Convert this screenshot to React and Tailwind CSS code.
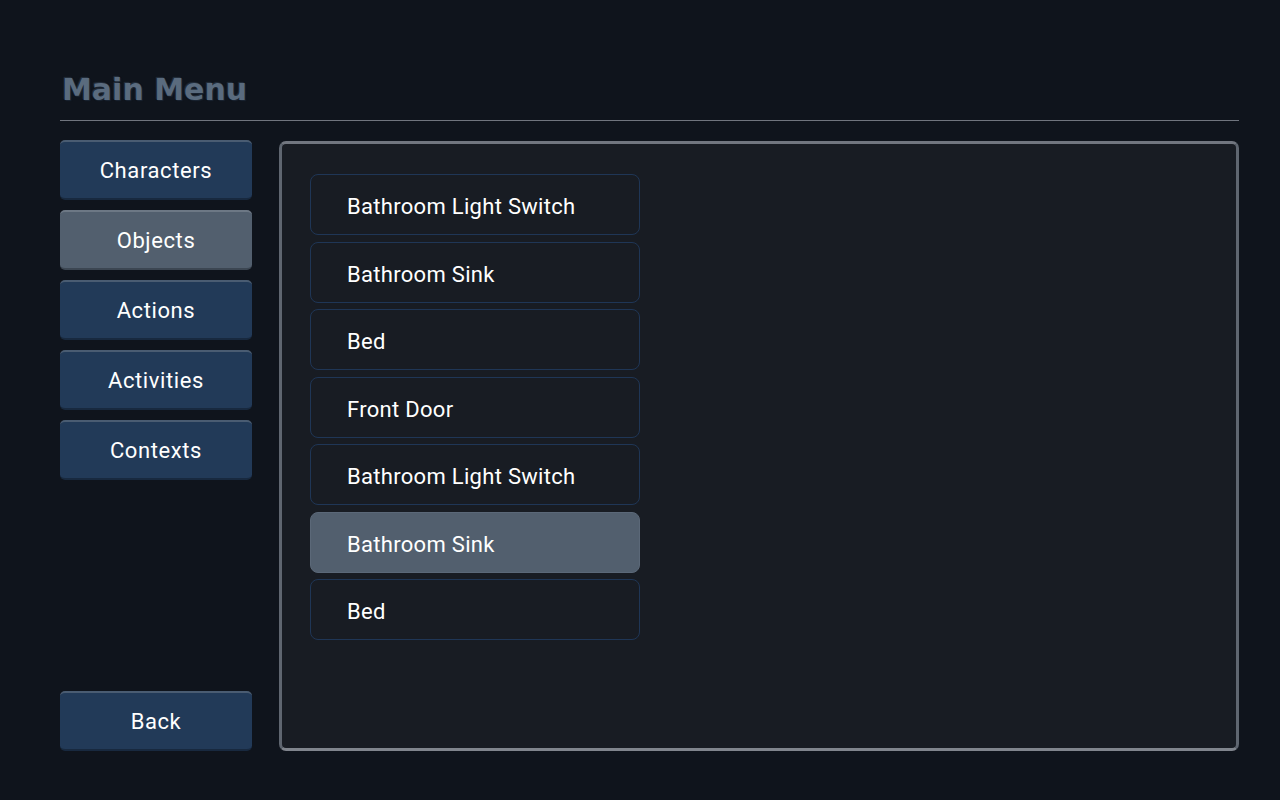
import React from 'react';

const menu = ['Characters', 'Objects', 'Actions', 'Activities', 'Contexts'];
const objects = [
  'Bathroom Light Switch',
  'Bathroom Sink',
  'Bed',
  'Front Door',
  'Bathroom Light Switch',
  'Bathroom Sink',
  'Bed',
];

function SideButton({ label, active }) {
  return (
    <button
      className={`h-[60px] w-full rounded-[5px] border-t-2 border-b-2 pt-[1px] text-[22px] text-white tracking-[0.6px] ${
        active
          ? 'bg-[#525f6e] border-t-[#6d7885] border-b-[#3c4652]'
          : 'bg-[#223a58] border-t-[#4a5c72] border-b-[#18293f]'
      }`}
    >
      {label}
    </button>
  );
}

export default function App() {
  return (
    <div className="w-[1280px] h-[800px] bg-[#0f141c] font-['Roboto',sans-serif] pl-[60px] pr-[41px] pt-[69px] flex flex-col">
      <div className="h-[52px] border-b border-[#70757e] flex items-start">
        <h1
          className="ml-[2px] text-[30px] leading-[42px] font-bold text-[#5a6b7e] font-['DejaVu_Sans',sans-serif]"
          style={{ textShadow: '0 0 1px #1b2533, 1px 1px 1px #1b2533, -1px -1px 1px #26313f' }}
        >
          Main Menu
        </h1>
      </div>

      <div className="flex gap-[27px] mt-[19px] h-[611px]">
        <div className="w-[192px] flex flex-col justify-between">
          <div className="flex flex-col gap-[10px]">
            {menu.map((m) => (
              <SideButton key={m} label={m} active={m === 'Objects'} />
            ))}
          </div>
          <SideButton label="Back" />
        </div>

        <div className="flex-1 mt-[1px] rounded-[7px] border-[3px] border-t-[#71767f] border-l-[#5f6670] border-r-[#5f6670] border-b-[#80858d] bg-[#181c23] pl-[28px] pt-[30px]">
          <div className="w-[330px] flex flex-col gap-[6.5px]">
            {objects.map((o, i) => (
              <div
                key={i}
                className={`h-[61px] rounded-[8px] border flex items-center pl-[36px] pt-[4px] text-[22px] tracking-[0.3px] text-white ${
                  i === 5 ? 'bg-[#525f6e] border-[#5b6878]' : 'border-[#1f3656]'
                }`}
              >
                {o}
              </div>
            ))}
          </div>
        </div>
      </div>
    </div>
  );
}
